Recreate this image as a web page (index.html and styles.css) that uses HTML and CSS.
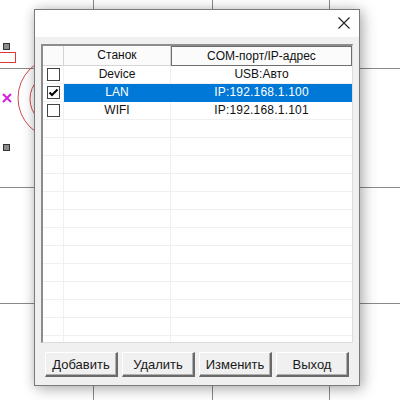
FILE: index.html
```html
<!DOCTYPE html>
<html lang="ru">
<head>
  <meta charset="UTF-8" />
  <title>Станок</title>
  <link rel="stylesheet" href="styles.css">
</head>
<body>
  <div class="canvas">
    <div class="hline" style="top: 68px"></div>
    <div class="hline" style="top: 187px"></div>
    <div class="hline" style="top: 303px"></div>
    <div class="vline" style="left: 93px"></div>
    <div class="vline" style="left: 212px"></div>
    <div class="vline" style="left: 329px"></div>

    <div class="node" style="top: 43px"></div>
    <div class="node" style="top: 144px"></div>
    <div class="red-box"></div>

    <svg class="shapes" width="120" height="200" viewBox="0 0 120 200">
      <circle cx="59" cy="98" r="41" fill="none" stroke="#d24a4a" stroke-width="1"/>
      <circle cx="57" cy="99" r="27" fill="none" stroke="#d24a4a" stroke-width="1"/>
      <path d="M3 94 L11 102 M11 94 L3 102" stroke="#d81ee0" stroke-width="2" fill="none"/>
    </svg>
  </div>

  <div class="dialog">
    <div class="titlebar">
      <svg class="close" width="12" height="12" viewBox="0 0 12 12">
        <path d="M0.5 0.5 L11.5 11.5 M11.5 0.5 L0.5 11.5" stroke="#222" stroke-width="1.1" fill="none"/>
      </svg>
    </div>

    <div class="body">
      <div class="listview">
        <div class="row head">
          <div class="cell c1"></div>
          <div class="cell c2">Станок</div>
          <div class="cell c3 hot">COM-порт/IP-адрес</div>
        </div>

        <div class="row">
          <div class="cell c1"><span class="check"></span></div>
          <div class="cell c2">Device</div>
          <div class="cell c3">USB:Авто</div>
        </div>
        <div class="row selected">
          <div class="cell c1">
            <span class="check">
              <svg width="11" height="11" viewBox="0 0 11 11"><path d="M1.5 5.5 L4 8 L9.5 2.5" stroke="#000" stroke-width="2" fill="none"/></svg>
            </span>
          </div>
          <div class="cell c2">LAN</div>
          <div class="cell c3 ip">IP:192.168.1.100</div>
        </div>
        <div class="row">
          <div class="cell c1"><span class="check"></span></div>
          <div class="cell c2">WIFI</div>
          <div class="cell c3 ip">IP:192.168.1.101</div>
        </div>

        <div class="row"><div class="cell c1"></div><div class="cell c2"></div><div class="cell c3"></div></div>
        <div class="row"><div class="cell c1"></div><div class="cell c2"></div><div class="cell c3"></div></div>
        <div class="row"><div class="cell c1"></div><div class="cell c2"></div><div class="cell c3"></div></div>
        <div class="row"><div class="cell c1"></div><div class="cell c2"></div><div class="cell c3"></div></div>
        <div class="row"><div class="cell c1"></div><div class="cell c2"></div><div class="cell c3"></div></div>
        <div class="row"><div class="cell c1"></div><div class="cell c2"></div><div class="cell c3"></div></div>
        <div class="row"><div class="cell c1"></div><div class="cell c2"></div><div class="cell c3"></div></div>
        <div class="row"><div class="cell c1"></div><div class="cell c2"></div><div class="cell c3"></div></div>
        <div class="row"><div class="cell c1"></div><div class="cell c2"></div><div class="cell c3"></div></div>
        <div class="row"><div class="cell c1"></div><div class="cell c2"></div><div class="cell c3"></div></div>
        <div class="row"><div class="cell c1"></div><div class="cell c2"></div><div class="cell c3"></div></div>
        <div class="row"><div class="cell c1"></div><div class="cell c2"></div><div class="cell c3"></div></div>
        <div class="row"><div class="cell c1"></div><div class="cell c2"></div><div class="cell c3"></div></div>
      </div>

      <div class="buttons">
        <button type="button">Добавить</button>
        <button type="button">Удалить</button>
        <button type="button">Изменить</button>
        <button type="button">Выход</button>
      </div>
    </div>
  </div>
</body>
</html>
```

FILE: styles.css
```css
body {
  margin: 0;
  width: 400px;
  height: 400px;
  overflow: hidden;
  position: relative;
  background: #fff;
  font-family: 'Liberation Sans', Arial, sans-serif;
  font-size: 12px;
  color: #111;
}

/* drawing canvas behind the dialog */
.canvas {
  position: absolute;
  inset: 0;
}

.hline {
  position: absolute;
  left: 0;
  width: 400px;
  height: 1px;
  background: #8a8a8a;
}

.vline {
  position: absolute;
  top: 0;
  width: 1px;
  height: 400px;
  background: #8a8a8a;
}

.node {
  position: absolute;
  left: 3px;
  width: 5px;
  height: 5px;
  background: #8c8c8c;
  border: 1px solid #333;
}

.red-box {
  position: absolute;
  left: -2px;
  top: 52px;
  width: 16px;
  height: 9px;
  background: #fff;
  border: 1px solid #e03838;
}

.shapes {
  position: absolute;
  left: 0;
  top: 0;
}

/* dialog window */
.dialog {
  position: absolute;
  left: 34px;
  top: 9px;
  width: 324px;
  height: 375px;
  border: 1px solid #7a7a7a;
  background: #f0f0f0;
  box-shadow: 3px 3px 14px rgba(0,0,0,0.28), 0 0 10px rgba(0,0,0,0.12);
  display: flex;
  flex-direction: column;
}

.titlebar {
  height: 27px;
  background: #fff;
  display: flex;
  justify-content: flex-end;
  align-items: center;
  padding-right: 9px;
}

.close {
  margin-top: -1px;
}

.body {
  padding: 7px 5px 0 6px;
}

.listview {
  width: 309px;
  height: 296px;
  overflow: hidden;
  background: #fff;
  border-top: 2px solid #8c8c8c;
  border-left: 2px solid #8c8c8c;
  border-right: 1px solid #dcdcdc;
  border-bottom: 1px solid #dcdcdc;
}

.row {
  display: flex;
  height: 18px;
}

.cell {
  box-sizing: border-box;
  height: 18px;
  line-height: 17px;
  text-align: center;
  white-space: nowrap;
  border-bottom: 1px solid #f0f0f0;
  border-right: 1px solid #f0f0f0;
}

.c1 { width: 21px; padding-left: 4px; text-align: left; }
.c2 { width: 107px; }
.c3 { width: 181px; border-right: none; }

.ip {
  letter-spacing: 0.2px;
}

.head {
  height: 20px;
}

.head .cell {
  height: 20px;
  line-height: 19px;
  background: #fbfbfb;
  border-bottom: 1px solid #d5d5d5;
  border-right: 1px solid #d5d5d5;
}

.head .hot {
  border: 1px solid #6e6e6e;
  line-height: 18px;
}

.check {
  display: inline-block;
  box-sizing: border-box;
  width: 13px;
  height: 13px;
  margin-top: 2px;
  vertical-align: top;
  background: #fff;
  border: 1px solid #444;
}

.check svg {
  display: block;
}

.selected .c2,
.selected .c3 {
  background: #0078d7;
  color: #fff;
  border-color: #0078d7;
}

.buttons {
  display: flex;
  gap: 4px;
  padding: 9px 0 0 4px;
}

button {
  width: 73px;
  height: 25px;
  padding: 0;
  font-family: 'Liberation Sans', Arial, sans-serif;
  font-size: 13px;
  color: #1a1a1a;
  background: #f0f0f0;
  border-top: 1px solid #fff;
  border-left: 1px solid #fff;
  border-right: 2px solid #6a6a6a;
  border-bottom: 2px solid #6a6a6a;
  box-shadow: inset -1px -1px 0 #b0b0b0;
}
```
